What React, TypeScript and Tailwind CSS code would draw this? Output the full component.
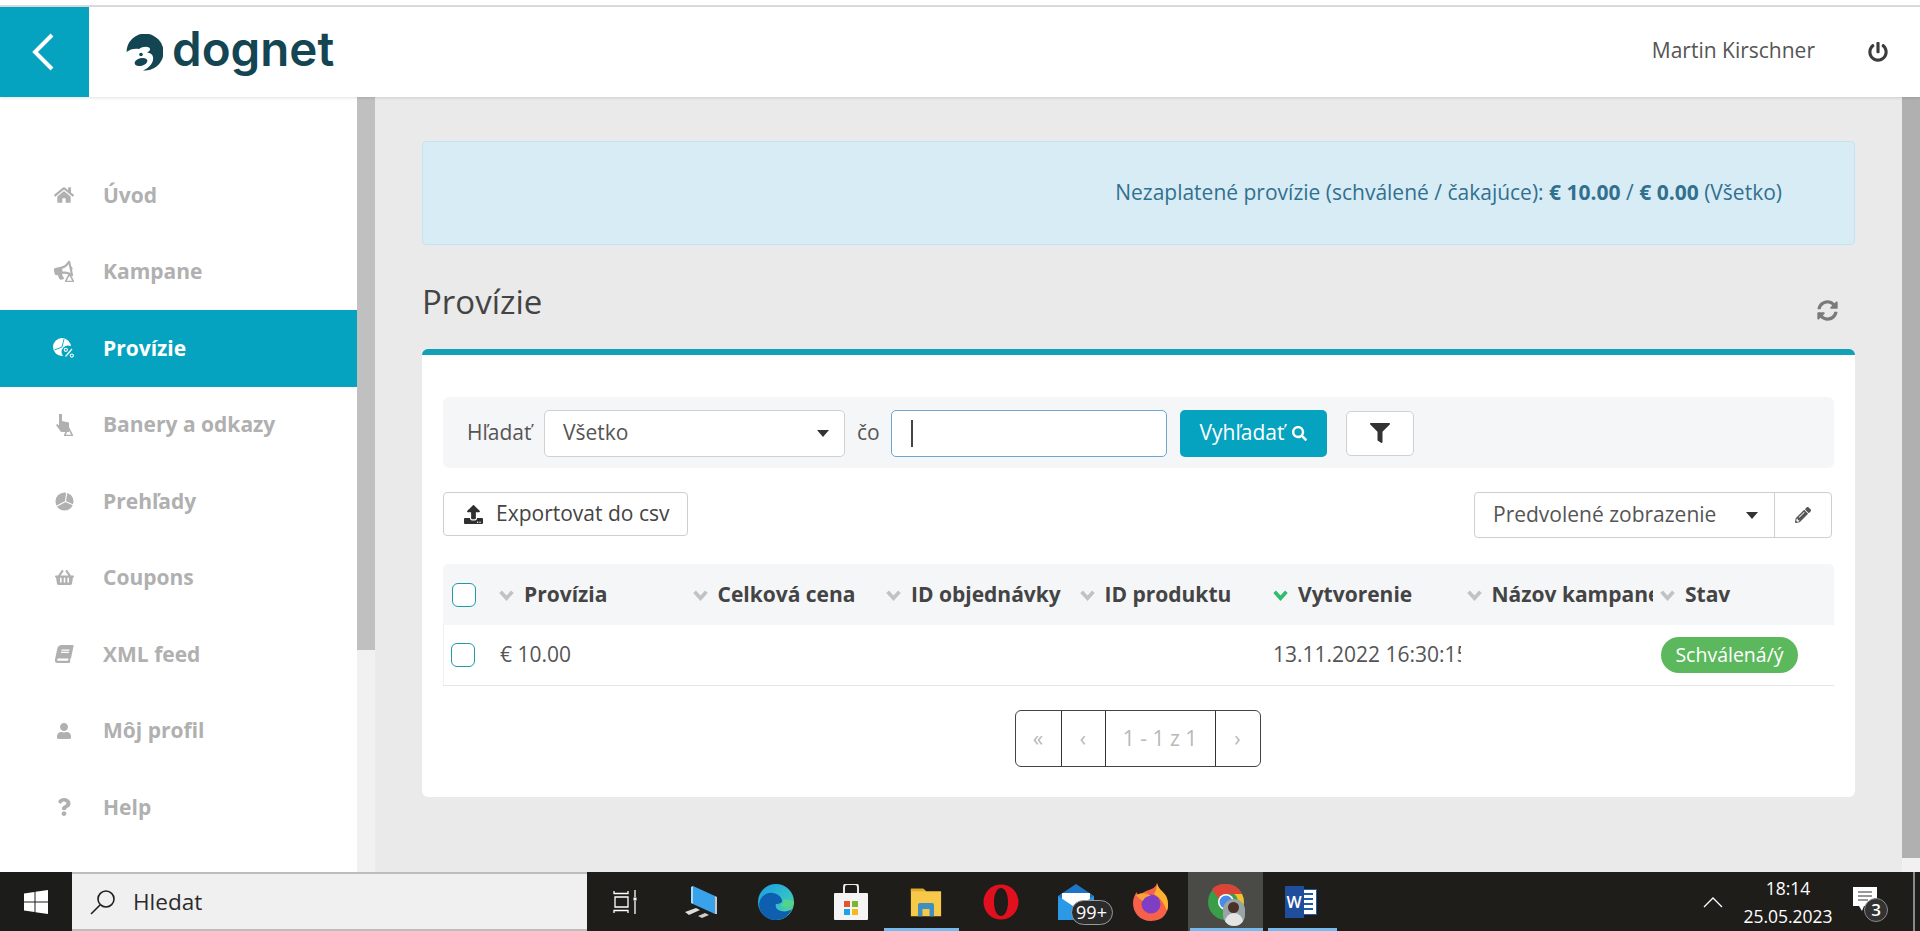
import { FaBook, FaBullhorn, FaFilter, FaHome, FaPencilAlt, FaPowerOff, FaQuestion, FaSearch, FaShoppingBasket, FaSyncAlt, FaUpload, FaUser } from "react-icons/fa";

function Triangle({ className }: { className: string }) {
  return (
    <svg viewBox="0 0 10 10" className={className}>
      <path d="M5 1 9.500 9.500H.5Z" fill="none" stroke="currentColor" strokeWidth="1.800" />
    </svg>
  );
}

function BullhornIcon() {
  return (
    <span className="relative block h-[21px] w-[20px]">
      <FaBullhorn size={19} className="-rotate-12" />
      <Triangle className="absolute bottom-0 right-0 h-[9px] w-[9px]" />
    </span>
  );
}

function PercentPieIcon() {
  return (
    <svg viewBox="0 0 22 20" className="h-[20px] w-[22px]" fill="currentColor">
      <circle cx="9" cy="9" r="9" />
      <path d="M9 9 1.500 12M9 9l2-8" stroke="#05a3bf" strokeWidth="0.900" />
      <circle cx="15" cy="14" r="6.500" fill="#05a3bf" />
      <circle cx="12.800" cy="11.800" r="1.600" fill="none" stroke="currentColor" strokeWidth="1.100" />
      <circle cx="18.800" cy="17.600" r="1.600" fill="none" stroke="currentColor" strokeWidth="1.100" />
      <path d="M19 11 12.500 18.500" stroke="currentColor" strokeWidth="1.200" />
    </svg>
  );
}

function HandIcon() {
  return (
    <span className="relative block h-[22px] w-[18px]">
      <svg viewBox="0 0 18 22" className="h-[22px] w-[18px]" fill="currentColor">
        <path d="M4 0h3v7l7 1.500V18H6L1 11l1.500-1L4 11.500Z" />
      </svg>
      <Triangle className="absolute bottom-0 right-0 h-[9px] w-[9px]" />
    </span>
  );
}

function PieIcon() {
  return (
    <svg viewBox="0 0 20 20" className="h-[19px] w-[19px]">
      <circle cx="10" cy="10" r="9.500" fill="currentColor" />
      <path d="M11 10 12.500 0M11 10l9 4M11 10 1.500 15" stroke="#ffffff" strokeWidth="1.200" />
    </svg>
  );
}

const navItems = [
  { label: "Úvod", icon: <FaHome size={20} /> },
  { label: "Kampane", icon: <BullhornIcon /> },
  { label: "Provízie", icon: <PercentPieIcon />, active: true },
  { label: "Banery a odkazy", icon: <HandIcon /> },
  { label: "Prehľady", icon: <PieIcon /> },
  { label: "Coupons", icon: <FaShoppingBasket size={19} /> },
  { label: "XML feed", icon: <FaBook size={18} className="-skew-x-12" /> },
  { label: "Môj profil", icon: <FaUser size={16} /> },
  { label: "Help", icon: <FaQuestion size={18} /> },
];

function Chevron({ green }: { green?: boolean }) {
  return (
    <svg viewBox="0 0 14 10" className="h-[12px] w-[15px] shrink-0">
      <path d="M1.500 2 7 8l5.500-6" fill="none" stroke={green ? "#2ebd6b" : "#c2c2c2"} strokeWidth="3.400" />
    </svg>
  );
}

function Caret() {
  return (
    <svg viewBox="0 0 12 7" className="h-[7px] w-[12px]">
      <path d="M0 0h12L6 7Z" fill="#333333" />
    </svg>
  );
}

const columns = [
  { label: "Provízia" },
  { label: "Celková cena" },
  { label: "ID objednávky" },
  { label: "ID produktu" },
  { label: "Vytvorenie", sorted: true },
  { label: "Názov kampane" },
  { label: "Stav" },
];

function Checkbox() {
  return <span className="block h-[24px] w-[24px] rounded-[6px] border border-[#1f9aa8] bg-white" />;
}

function LogoMark() {
  return (
    <svg viewBox="0 0 37 37" className="h-[37px] w-[37px]" fill="#134552">
      <path d="M0.500 18A18.500 18.500 0 1 1 17 36.500C23 34 28 29 27 23 26.500 20 24 19 21 18.500 24 17 25 15 23 13.500 20 12 16 13 13 15 9 14 4 15 0.500 18Z" />
      <ellipse cx="15" cy="28" rx="6.500" ry="3.800" transform="rotate(-15 15 28)" />
      <circle cx="15" cy="20.500" r="1.800" />
    </svg>
  );
}

function WindowsLogo() {
  return (
    <svg viewBox="0 0 24 24" className="h-[24px] w-[24px]" fill="#ffffff">
      <path d="M0 3.500 10.500 2v9.500H0ZM11.500 1.800 24 0v11.500H11.500ZM0 12.500h10.500V22L0 20.500ZM11.500 12.500H24V24l-12.500-1.800Z" />
    </svg>
  );
}

function TaskViewIcon() {
  return (
    <svg viewBox="0 0 26 24" className="h-[24px] w-[26px]" fill="none" stroke="#ffffff" strokeWidth="1.300">
      <path d="M1 1v2.500h14V1M1 23v-2.500h14V23M2 7h13v10H2ZM22 0v7M22 11v13" />
      <rect x="20.500" y="7.500" width="3" height="3" fill="#ffffff" stroke="none" />
    </svg>
  );
}

function ComputerIcon() {
  return (
    <svg viewBox="0 0 36 36" className="h-[36px] w-[36px]">
      <path d="M10 2 32 12v18L10 20Z" fill="#39a2ea" />
      <path d="M8 3l2-1v18l-2-1Z" fill="#a9dcf7" />
      <path d="M32 12l2 1v17l-2 0Z" fill="#c8c8c8" />
      <path d="M2 28 13 24l4 2-11 5Z" fill="#dddddd" />
      <path d="M15 32l7-3 4 2-7 3Z" fill="#cfcfcf" />
    </svg>
  );
}

function EdgeIcon() {
  return (
    <svg viewBox="0 0 36 36" className="h-[36px] w-[36px]">
      <defs>
        <linearGradient id="edgeTop" x1="0" y1="0" x2="1" y2="1">
          <stop offset="0" stopColor="#1b9de2" />
          <stop offset="0.6" stopColor="#35c1c9" />
          <stop offset="1" stopColor="#6fdc6a" />
        </linearGradient>
      </defs>
      <circle cx="18" cy="18" r="18" fill="url(#edgeTop)" />
      <path d="M1 20C2 12 9 8 15 9c6 1 9 5 9 8 0 2-3 3-6 3-1 2 0 6 5 7 4 1 8 0 11-2-3 7-9 11-16 11C8 36 1 29 1 20Z" fill="#0f5fb0" />
      <path d="M36 20c-2 2-6 3-10 3-2 0-3-1-3-2 2-1 3-3 2-6l11 2Z" fill="#53d48a" />
    </svg>
  );
}

function StoreIcon() {
  return (
    <svg viewBox="0 0 36 36" className="h-[36px] w-[36px]">
      <path d="M11 9V3c0-2 1-3 3-3h8c2 0 3 1 3 3v6" fill="none" stroke="#e8e8e8" strokeWidth="2" />
      <rect x="1" y="9" width="34" height="27" rx="1" fill="#f4f4f4" />
      <rect x="11" y="17" width="6" height="6" fill="#e8532b" />
      <rect x="19" y="17" width="6" height="6" fill="#7cb82f" />
      <rect x="11" y="25" width="6" height="6" fill="#1fa3e6" />
      <rect x="19" y="25" width="6" height="6" fill="#f7b71d" />
    </svg>
  );
}

function FolderIcon() {
  return (
    <svg viewBox="0 0 36 36" className="h-[32px] w-[34px]">
      <path d="M1 3h14l3 3h17v28H1Z" fill="#f7c948" />
      <path d="M1 3h14l3 3H1Z" fill="#e2a92e" />
      <path d="M9 34V21c0-1 1-2 2-2h14c1 0 2 1 2 2v13h-5v-8h-8v8Z" fill="#3d8fc4" />
    </svg>
  );
}

function OperaIcon() {
  return (
    <svg viewBox="0 0 36 36" className="h-[36px] w-[36px]">
      <path d="M18 0.500a17.500 17.500 0 1 0 0 35 17.500 17.500 0 1 0 0-35ZM18 4c4 0 7 6 7 14s-3 14-7 14-7-6-7-14 3-14 7-14Z" fill="#e0101e" fillRule="evenodd" />
    </svg>
  );
}

function MailIcon() {
  return (
    <span className="relative block h-[36px] w-[36px]">
      <svg viewBox="0 0 36 36" className="h-[36px] w-[36px]">
        <path d="M0 12 18 0l18 12v24H0Z" fill="#1e75c8" />
        <path d="M4 9h28v11L18 26 4 20Z" fill="#ffffff" />
        <path d="M0 12l18 12 18-12v24H0Z" fill="#2b9ae6" />
      </svg>
      <span className="absolute left-[13px] top-[16px] flex h-[25px] w-[42px] items-center justify-center rounded-full border border-[#9a9a9a] bg-[#2b2b2b] text-[18px] text-white">
        99+
      </span>
    </span>
  );
}

function FirefoxIcon() {
  return (
    <svg viewBox="0 0 36 38" className="h-[38px] w-[36px]">
      <path d="M24 0c1 6 6 8 9 13 4 8 3 25-15 25C7 38 0 30 0 20c0-5 2-9 4-11 0 2 1 4 2 5 2-4 6-6 10-7 3-1 7-3 8-7Z" fill="#f7604a" />
      <path d="M24 0c1 6 6 8 9 13 2 4 3 10 1 15-2-6-6-13-13-17 2-3 3-7 3-11Z" fill="#fbb32f" />
      <circle cx="18" cy="21" r="9.500" fill="#7f3fc4" />
      <path d="M3 12c5-3 12-2 15 1-4 0-7 2-8 5-2-1-5-3-7-6Z" fill="#f9a13b" />
    </svg>
  );
}

function ChromeIcon() {
  return (
    <span className="relative block h-[36px] w-[36px]">
      <svg viewBox="0 0 36 36" className="h-[36px] w-[36px]">
        <circle cx="18" cy="18" r="18" fill="#3a9d4a" />
        <path d="M18 0a18 18 0 0 1 16 10H18a8 8 0 0 0-7.500 5L4 5A18 18 0 0 1 18 0Z" fill="#dc4437" />
        <path d="M34 10a18 18 0 0 1-14 26l8-14a8 8 0 0 0-2-12Z" fill="#f4c02f" />
        <circle cx="18" cy="18" r="8" fill="#ffffff" />
        <circle cx="18" cy="18" r="6.500" fill="#4a8ae8" />
      </svg>
      <span className="absolute left-[15px] top-[15px] h-[27px] w-[22px] overflow-hidden rounded-full bg-[#9aa4a4]">
        <span className="mx-auto mt-[3px] block h-[11px] w-[11px] rounded-full bg-[#4a3228]" />
        <span className="mx-auto block h-[13px] w-[18px] rounded-t-full bg-[#e4e4e4]" />
      </span>
    </span>
  );
}

function WordIcon() {
  return (
    <span className="relative block h-[32px] w-[32px]">
      <span className="absolute right-0 top-[3px] flex h-[26px] w-[20px] flex-col justify-center gap-[3px] border border-[#1f5ca8] bg-white px-[3px]">
        <span className="h-[2px] bg-[#1f5ca8]" />
        <span className="h-[2px] bg-[#1f5ca8]" />
        <span className="h-[2px] bg-[#1f5ca8]" />
        <span className="h-[2px] bg-[#1f5ca8]" />
      </span>
      <span className="absolute left-0 top-0 flex h-[32px] w-[19px] items-center justify-center bg-[#1f4f9c] text-[16px] font-semibold text-white">
        W
      </span>
    </span>
  );
}

const taskbarApps = [
  { icon: <TaskViewIcon /> },
  { icon: <ComputerIcon /> },
  { icon: <EdgeIcon /> },
  { icon: <StoreIcon /> },
  { icon: <FolderIcon />, open: "left-[-4px] right-[4px]" },
  { icon: <OperaIcon /> },
  { icon: <MailIcon /> },
  { icon: <FirefoxIcon /> },
  { icon: <ChromeIcon />, open: "left-[2px] right-0", current: true },
  { icon: <WordIcon />, open: "left-[5px] right-[1px]" },
];

export default function App() {
  return (
    <div className="flex h-screen flex-col overflow-hidden bg-white font-['Open_Sans',sans-serif] text-[21px] text-[#555555]">

      {/* TOP STRIP */}
      <div className="h-[7px] shrink-0 border-b-2 border-[#dcdcdc] bg-white" />

      {/* HEADER */}
      <header className="relative z-10 flex h-[90px] shrink-0 items-center bg-white shadow-[0_1px_3px_rgba(0,0,0,0.12)]">
        <button className="flex h-full w-[89px] items-center justify-center bg-[#05a3bf]">
          <svg viewBox="0 0 24 38" className="mr-[4px] h-[38px] w-[24px]">
            <path d="M21 2 4 19l17 17" fill="none" stroke="#ffffff" strokeWidth="4" />
          </svg>
        </button>
        <div className="ml-[37px] flex items-center gap-[9px]">
          <LogoMark />
          <span className="mt-[-7px] font-['Inter',sans-serif] text-[47.500px] font-semibold leading-none text-[#134552]">
            dognet
          </span>
        </div>
        <span className="mb-[2px] ml-auto text-[#555555]">Martin Kirschner</span>
        <FaPowerOff size={20} className="ml-[53px] mr-[32px] text-[#3c3c3c]" />
      </header>

      <div className="flex min-h-0 flex-1">

        {/* SIDEBAR */}
        <nav className="w-[357px] shrink-0 bg-white pt-[60px]">
          {navItems.map((item) => (
            <a
              key={item.label}
              className={`flex h-[76.5px] items-center font-bold ${item.active ? "bg-[#05a3bf] text-white" : "text-[#b0b0b0]"}`}
            >
              <span className="ml-[52px] mr-[27px] flex w-[24px] justify-center">{item.icon}</span>
              {item.label}
            </a>
          ))}
        </nav>
        <div className="w-[18px] shrink-0 bg-[#f1f1f1]">
          <div className="h-[553px] bg-[#c0c0c0]" />
        </div>

        {/* MAIN */}
        <main className="min-w-0 flex-1 bg-[#eaeaea] pl-[47px] pr-[47px] pt-[44px]">
          <div className="flex h-[104px] items-center justify-end rounded-[4px] border border-[#c5e3ee] bg-[#d8ecf6] pr-[72px] text-[#31708f]">
            <span>
              Nezaplatené provízie (schválené / čakajúce): <b>€ 10.00</b> / <b>€ 0.00</b> (Všetko)
            </span>
          </div>

          <div className="flex h-[104px] items-center justify-between pr-[17px]">
            <h1 className="mt-[10px] text-[33px] text-[#444444]">Provízie</h1>
            <FaSyncAlt size={21} className="mt-[26px] text-[#7a7a7a]" />
          </div>

          <section className="rounded-[6px] border-t-[6px] border-[#13a0b6] bg-white px-[21px] pb-[30px] pt-[42px]">

            {/* SEARCH */}
            <div className="flex h-[71px] items-center rounded-[6px] bg-[#f5f6f8] pl-[24px] pt-[1px]">
              <span className="w-[65px]">Hľadať</span>
              <div className="ml-[12px] flex h-[47px] w-[301px] items-center justify-between rounded-[5px] border border-[#d0d0d0] bg-white pl-[18px] pr-[15px]">
                Všetko
                <Caret />
              </div>
              <span className="mx-[12px] w-[22px]">čo</span>
              <div className="flex h-[47px] w-[276px] items-center rounded-[5px] border border-[#6ea6cf] bg-white pl-[19px]">
                <span className="h-[27px] w-[2px] bg-[#444444]" />
              </div>
              <button className="ml-[13px] flex h-[47px] w-[147px] items-center justify-center gap-[8px] rounded-[5px] bg-[#05a3bf] text-white">
                Vyhľadať
                <FaSearch size={15} />
              </button>
              <button className="ml-[19px] flex h-[45px] w-[68px] items-center justify-center rounded-[5px] border border-[#d0d0d0] bg-white text-[#333333]">
                <FaFilter size={20} />
              </button>
            </div>

            {/* TOOLBAR */}
            <div className="mt-[24px] flex h-[46px] items-start justify-between pr-[2px]">
              <button className="flex h-[44px] w-[245px] items-center gap-[13px] rounded-[4px] border border-[#cfcfcf] bg-white pl-[20px] text-[#444444]">
                <FaUpload size={19} className="text-[#2f2f2f]" />
                Exportovat do csv
              </button>
              <div className="flex h-[46px] w-[358px] rounded-[4px] border border-[#cfcfcf] bg-white">
                <div className="flex flex-1 items-center justify-between border-r border-[#cfcfcf] pl-[18px] pr-[16px]">
                  Predvolené zobrazenie
                  <Caret />
                </div>
                <div className="flex w-[56px] items-center justify-center text-[#555555]">
                  <FaPencilAlt size={16} />
                </div>
              </div>
            </div>

            {/* TABLE */}
            <div className="mt-[26px] overflow-hidden rounded-t-[5px] border-b border-[#e6e6e6]">
              <div className="grid h-[61px] grid-cols-[54px_repeat(6,193.5px)_1fr] items-center bg-[#f5f6f8]">
                <span className="pl-[9px]"><Checkbox /></span>
                {columns.map((column) => (
                  <div key={column.label} className="mr-[5px] flex items-center gap-[10px] overflow-hidden whitespace-nowrap pl-[2px] font-bold text-[#444444]">
                    <Chevron green={column.sorted} />
                    {column.label}
                  </div>
                ))}
              </div>
              <div className="grid h-[60px] grid-cols-[54px_repeat(6,193.5px)_1fr] items-center border-l border-[#f0f0f0]">
                <span className="pl-[7px]"><Checkbox /></span>
                <span className="pl-[2px]">€ 10.00</span>
                <span />
                <span />
                <span />
                <span className="mr-[5px] overflow-hidden whitespace-nowrap pl-[1px]">13.11.2022 16:30:15</span>
                <span />
                <span className="ml-[2px] flex h-[36px] w-[137px] items-center justify-center rounded-full bg-[#5cb85c] text-[19.5px] text-white">
                  Schválená/ý
                </span>
              </div>
            </div>

            {/* PAGINATION */}
            <div className="mt-[24px] flex justify-center pr-[2px]">
              <div className="flex h-[57px] items-center rounded-[6px] border border-[#444444] text-[#b8b8b8]">
                <span className="flex h-full w-[46px] items-center justify-center border-r border-[#333333]">«</span>
                <span className="flex h-full w-[44px] items-center justify-center border-r border-[#333333]">‹</span>
                <span className="flex h-full w-[110px] items-center justify-center border-r border-[#333333]">1 - 1 z 1</span>
                <span className="flex h-full w-[44px] items-center justify-center">›</span>
              </div>
            </div>
          </section>
        </main>

        <div className="w-[18px] shrink-0 bg-[#f1f1f1]">
          <div className="h-[761px] bg-[#b0b0b0]" />
        </div>
      </div>

      {/* TASKBAR */}
      <footer className="flex h-[59px] shrink-0 items-stretch bg-[#1f1d1a] text-white">
        <div className="flex w-[72px] items-center justify-center bg-[#1c1c1a]">
          <WindowsLogo />
        </div>
        <div className="mr-[1px] flex w-[515px] items-center gap-[17px] border-y-2 border-[#bdbdbd] bg-[#f0f0f0] pl-[18px] text-[22.5px] text-[#2b2b2b]">
          <svg viewBox="0 0 26 26" className="h-[26px] w-[26px]" fill="none" stroke="#1f1f1f" strokeWidth="1.600">
            <circle cx="16" cy="10" r="8" />
            <path d="M10 16 1 25" />
          </svg>
          Hledat
        </div>
        {taskbarApps.map((app, index) => (
          <div
            key={index}
            className={`relative flex w-[75px] items-center justify-center ${app.current ? "bg-[#4a4a46]" : ""}`}
          >
            {app.icon}
            {app.open && <span className={`absolute bottom-0 h-[3px] bg-[#76b9ed] ${app.open}`} />}
          </div>
        ))}
        <div className="ml-auto flex items-center">
          <svg viewBox="0 0 20 12" className="h-[12px] w-[20px]" fill="none" stroke="#ffffff" strokeWidth="1.300">
            <path d="M1 11 10 2l9 9" />
          </svg>
          <div className="ml-[12px] flex w-[106px] flex-col items-center text-[17.5px] leading-[28px]">
            <span>18:14</span>
            <span>25.05.2023</span>
          </div>
          <div className="relative ml-[12px] mr-[36px] h-[30px] w-[24px]">
            <svg viewBox="0 0 24 24" className="h-[24px] w-[24px]">
              <path d="M0 0h24v19H11l-2 5-3-5H0Z" fill="#ffffff" />
              <path d="M5 5h14M5 9h14M5 13h10" stroke="#333333" strokeWidth="1" />
            </svg>
            <span className="absolute left-[11px] top-[11px] flex h-[24px] w-[24px] items-center justify-center rounded-full border border-[#8a8a8a] bg-[#333333] text-[17px] font-semibold">
              3
            </span>
          </div>
          <div className="mr-[5px] h-full w-[2px] bg-[#8a8a8a]" />
        </div>
      </footer>
    </div>
  );
}
